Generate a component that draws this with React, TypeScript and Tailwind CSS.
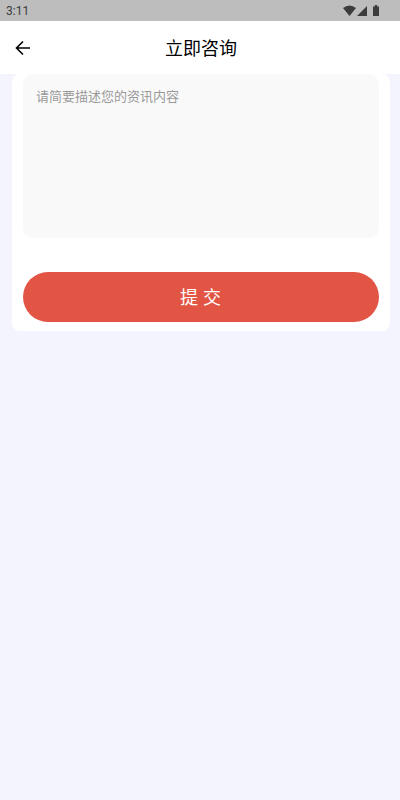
import { useState } from 'react';

const cjk = { fontFamily: '"Roboto", "Noto Sans CJK SC", sans-serif' };

function StatusBar() {
  return (
    <div className="h-[21px] bg-[#bdbdbd] flex items-center justify-between pl-[6px] pr-[21px] text-[#3c3c3c]">
      <span className="text-[12px] leading-none">3:11</span>
      <div className="flex items-center">
        <svg width="13" height="11" viewBox="0 0 13 11" fill="#3c3c3c" className="mr-[1px]">
          <path d="M0 3 Q6.5 -2 13 3 L6.5 11 Z" />
        </svg>
        <svg width="10" height="10" viewBox="0 0 10 10" fill="#3c3c3c" className="mr-[6px]">
          <path d="M10 0 V10 H0 Z" />
        </svg>
        <svg width="6" height="11" viewBox="0 0 6 11" fill="#3c3c3c">
          <path d="M1.8 0 H4.2 V1.5 H6 V11 H0 V1.5 H1.8 Z" />
        </svg>
      </div>
    </div>
  );
}

function Header() {
  return (
    <div className="h-[53px] bg-white relative flex items-center justify-center pt-[2px] pl-[2px]">
      <button className="absolute left-[15px] top-[19px]">
        <svg width="16" height="16" viewBox="0 0 16 16" fill="none" stroke="#000" strokeWidth="1.6" className="block">
          <path d="M15 8 H2 M8 1.5 L1.5 8 L8 14.5" />
        </svg>
      </button>
      <h1 className="text-[18px] text-black font-normal leading-none">立即咨询</h1>
    </div>
  );
}

export default function App() {
  const [content, setContent] = useState('');

  return (
    <div className="min-h-[800px] bg-[#f4f4fe] flex flex-col" style={cjk}>
      <StatusBar />
      <Header />
      <div className="ml-[12px] mr-[10px] bg-white rounded-[8px] px-[11px] pb-[9px]">
        <textarea
          value={content}
          onChange={(e) => setContent(e.target.value)}
          placeholder="请简要描述您的资讯内容"
          className="block w-full h-[164px] bg-[#f9f9f9] rounded-[10px] px-[13px] py-[14px] text-[13px] leading-[18px] text-[#333] placeholder:text-[#999] resize-none outline-none"
        />
        <button className="mt-[34px] block w-full h-[50px] rounded-full bg-[#e25443] text-white text-[18px] tracking-[5px] pt-[1px] pl-[4px]">
          提交
        </button>
      </div>
    </div>
  );
}
